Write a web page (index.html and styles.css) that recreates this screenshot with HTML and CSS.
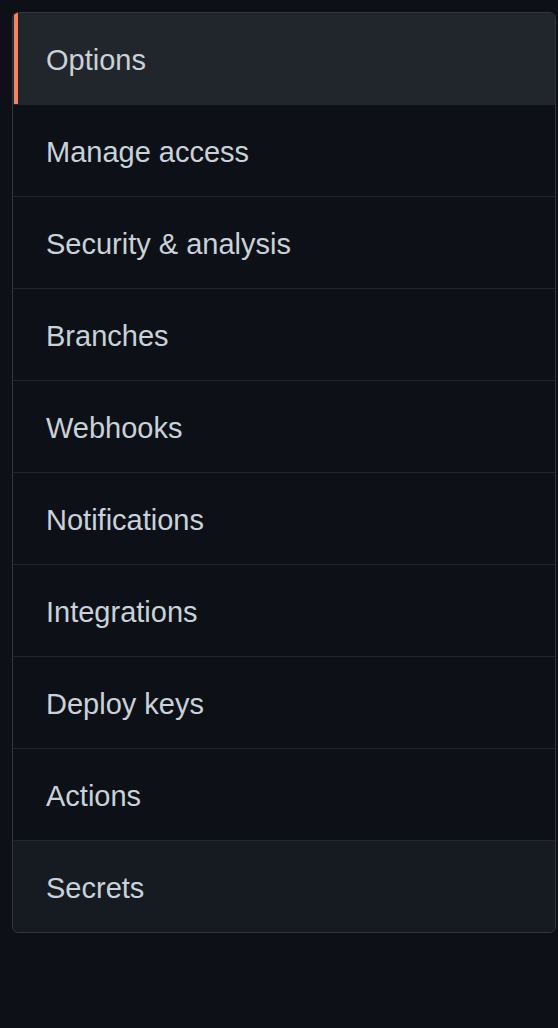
FILE: index.html
```html
<!DOCTYPE html>
<html lang="en">

<head>
  <meta charset="UTF-8">
  <meta name="viewport" content="width=device-width, initial-scale=1.0">
  <title>Settings menu</title>
  <link rel="stylesheet" href="styles.css">
</head>

<body>
  <!-- Repository settings menu -->
  <nav class="menu">
    <a class="menu-item selected" href="#">Options</a>
    <a class="menu-item" href="#">Manage access</a>
    <a class="menu-item" href="#">Security &amp; analysis</a>
    <a class="menu-item" href="#">Branches</a>
    <a class="menu-item" href="#">Webhooks</a>
    <a class="menu-item" href="#">Notifications</a>
    <a class="menu-item" href="#">Integrations</a>
    <a class="menu-item" href="#">Deploy keys</a>
    <a class="menu-item" href="#">Actions</a>
    <a class="menu-item hovered" href="#">Secrets</a>
  </nav>
</body>

</html>
```

FILE: styles.css
```css
/* General */
body {
  font-family: 'Liberation Sans', Arial, sans-serif;
  margin: 0;
  padding: 12px 2px 12px 12px;
  background-color: #0d1117;
}

/* Menu */
.menu {
  display: flex;
  flex-direction: column;
  border: 1px solid #30363d;
  border-radius: 6px;
  overflow: hidden;
}

.menu-item {
  position: relative;
  display: flex;
  align-items: center;
  box-sizing: border-box;
  height: 92px;
  padding: 4px 32px 0 33px;
  font-size: 29px;
  color: #c9d1d9;
  text-decoration: none;
  border-top: 1px solid #21262d;
}

.menu-item:first-child {
  height: 91px;
  border-top: none;
}

.menu-item.selected {
  background-color: #21262d;
}

.menu-item.selected::before {
  content: "";
  position: absolute;
  top: 0;
  bottom: 0;
  left: 1px;
  width: 4px;
  background-color: #f78166;
}

.menu-item.hovered {
  background-color: #161b22;
}
```
